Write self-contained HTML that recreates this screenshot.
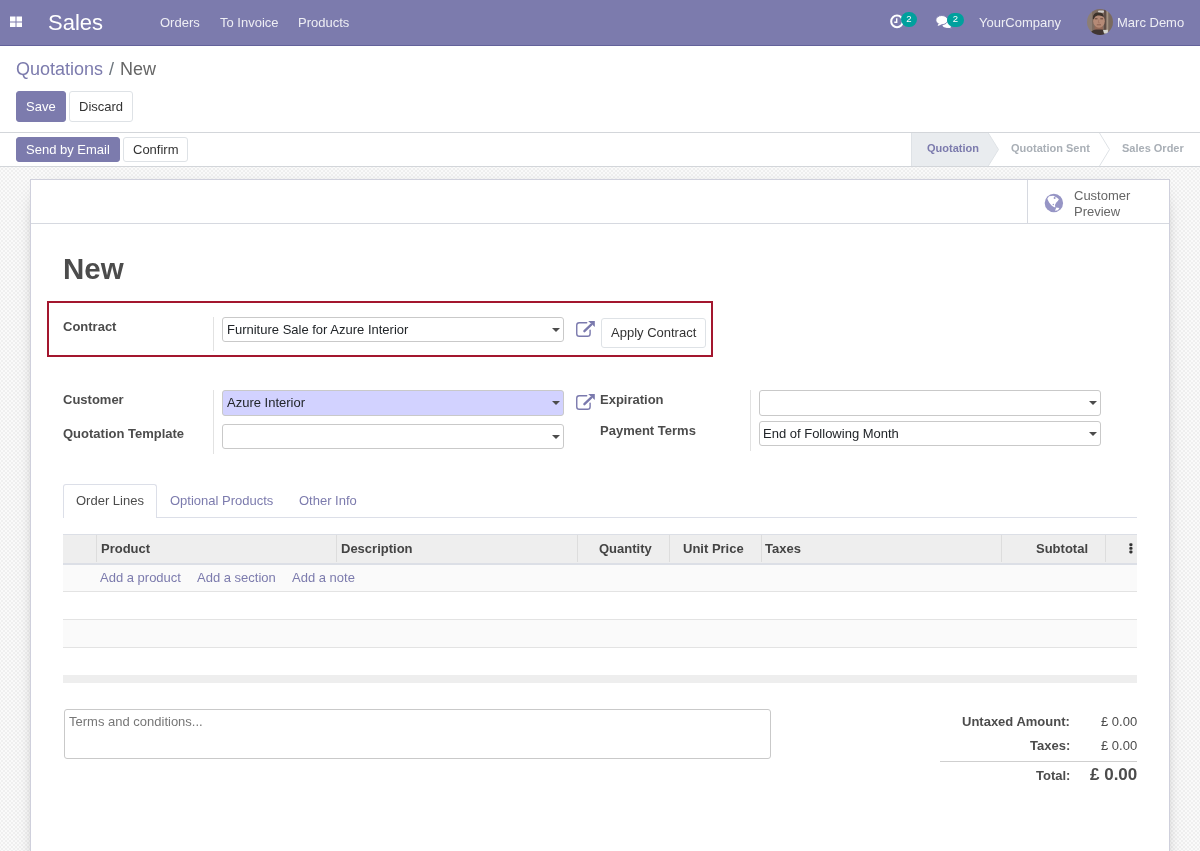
<!DOCTYPE html>
<html><head><meta charset="utf-8">
<style>
*{box-sizing:border-box;margin:0;padding:0}
html,body{width:1200px;height:851px;overflow:hidden;background:#fff}
body{font-family:"Liberation Sans",sans-serif;font-size:13px;color:#4c4c4c;position:relative;line-height:1}
.a{position:absolute;white-space:nowrap;line-height:1;will-change:transform}
#nav{position:absolute;left:0;top:0;width:1200px;height:46px;background:#7c7bad;border-bottom:1px solid #63629a}
.nt{position:absolute;white-space:nowrap;color:#eeeef4;font-size:13px;top:16px;line-height:1;will-change:transform}
.btn{position:absolute;border-radius:3px}
.bp{background:#7c7bad;border:1px solid #7c7bad}
.bs{background:#fff;border:1px solid #dee2e6}
.wt{color:#fff}
.dk{color:#333}
.lk{color:#7c7bad}
.b{font-weight:bold}
#bg{position:absolute;left:0;top:167px;width:1200px;height:684px;
 background-color:#f5f5f5;
 background-image:conic-gradient(#efefef 25%,#fafafa 0 50%,#efefef 0 75%,#fafafa 0);
 background-size:4px 4px;background-position:-1px 1px}
#sheet{position:absolute;left:30px;top:179px;width:1140px;height:700px;background:#fff;border:1px solid #cfd0dc;box-shadow:0 5px 20px -15px #000}
.inp{position:absolute;border:1px solid #c9c9c9;border-radius:3px;background:#fff}
.car{position:absolute;width:0;height:0;border-left:4px solid transparent;border-right:4px solid transparent;border-top:4px solid #4c4c4c}
.vs{position:absolute;width:1px;background:#e2e2e2}
.hl{position:absolute;height:1px}
</style></head><body>

<div id="nav">
  <svg class="a" style="left:10px;top:16px" width="12" height="11" viewBox="0 0 12 11">
    <rect x="0" y="0.5" width="5.5" height="5" fill="#fff"/><rect x="6.5" y="0.5" width="5.5" height="5" fill="#fff"/>
    <rect x="0" y="6.5" width="5.5" height="4.5" fill="#fff"/><rect x="6.5" y="6.5" width="5.5" height="4.5" fill="#fff"/>
  </svg>
  <div class="a" style="left:48px;top:12px;font-size:22px;color:#fff">Sales</div>
  <div class="nt" style="left:160px">Orders</div>
  <div class="nt" style="left:220px">To Invoice</div>
  <div class="nt" style="left:298px">Products</div>
  <!-- clock -->
  <svg class="a" style="left:888px;top:12px" width="20" height="20" viewBox="0 0 20 20">
    <circle cx="9" cy="9.4" r="5.8" fill="none" stroke="#fff" stroke-width="2"/>
    <path d="M8.7 6.3 V10.2 H6.3" fill="none" stroke="#fff" stroke-width="1.4"/>
  </svg>
  <div class="a" style="left:901px;top:11.7px;width:16px;height:14.5px;border-radius:8px;background:#00a09d;color:#fff;font-size:9.5px;text-align:center;line-height:14px">2</div>
  <!-- chat -->
  <svg class="a" style="left:930px;top:8px" width="24" height="24" viewBox="0 0 24 24">
    <ellipse cx="17" cy="16.6" rx="4.6" ry="3.2" fill="#fff"/>
    <path d="M18.5 18 L21.6 20.2 L15.5 19.6Z" fill="#fff"/>
    <ellipse cx="11.8" cy="12.1" rx="6" ry="4.6" fill="#fff" stroke="#7c7bad" stroke-width="0.9"/>
    <path d="M8.6 15.6 L7.6 17.9 L11.8 16.4Z" fill="#fff"/>
  </svg>
  <div class="a" style="left:947px;top:12.8px;width:17px;height:14.4px;border-radius:8px;background:#00a09d;color:#fff;font-size:9.5px;text-align:center;line-height:12px">2</div>
  <div class="nt" style="left:979px">YourCompany</div>
  <svg class="a" style="left:1087px;top:9px" width="26" height="26" viewBox="0 0 26 26">
    <defs><clipPath id="cl"><circle cx="13" cy="13" r="13"/></clipPath>
    <filter id="bl" x="-10%" y="-10%" width="120%" height="120%"><feGaussianBlur stdDeviation="0.45"/></filter></defs>
    <g clip-path="url(#cl)"><g filter="url(#bl)">
      <rect x="-1" y="-1" width="28" height="28" fill="#7e6c60"/>
      <rect x="-1" y="-1" width="6" height="28" fill="#8c7e74"/>
      <rect x="17" y="-1" width="2.5" height="28" fill="#5e4e44"/>
      <rect x="19.5" y="-1" width="2" height="28" fill="#a39282"/>
      <rect x="21.5" y="-1" width="6" height="28" fill="#7a6a5e"/>
      <rect x="11" y="1.6" width="6" height="2.2" rx="1" fill="#d0ccc8"/>
      <path d="M7.6 17 H16 V22 H7.6Z" fill="#946a58"/>
      <ellipse cx="12" cy="12.2" rx="5.8" ry="6.6" fill="#b58a76"/>
      <path d="M5.8 9.5 Q5.8 3.6 11.5 3.6 Q16.5 3.6 16.8 8 Q14 5.8 10.5 6.6 Q7.5 7.3 6.6 10.5Z" fill="#3b302a"/>
      <path d="M7.8 9.8 H10.5 M13.3 9.8 H16" stroke="#5a3c30" stroke-width="0.9"/>
      <path d="M11.8 10.5 L11.3 13.8 H12.8" fill="none" stroke="#9a6e5c" stroke-width="0.6"/>
      <path d="M9.8 15.8 H14" stroke="#7a5040" stroke-width="0.7"/>
      <path d="M2 27 Q4 20.5 9 20.5 H15 Q19 20.5 21 27Z" fill="#403630"/>
      <path d="M16 21 L20.8 20.8 L21 25 L17 24.5Z" fill="#d6d6d0"/>
    </g></g>
  </svg>
  <div class="nt" style="left:1117px">Marc Demo</div>
</div>

<!-- control panel -->
<div class="a lk" style="left:16px;top:60px;font-size:18px">Quotations</div>
<div class="a" style="left:108.5px;top:60px;font-size:18px;color:#6c757d">/</div>
<div class="a" style="left:120px;top:60px;font-size:18px;color:#666">New</div>
<div class="btn bp" style="left:16px;top:91px;width:50px;height:31px"></div>
<div class="a wt" style="left:26px;top:100px">Save</div>
<div class="btn bs" style="left:69px;top:91px;width:64px;height:31px"></div>
<div class="a dk" style="left:79px;top:100px">Discard</div>
<div class="hl" style="left:0;top:132px;width:1200px;background:#d3d6da"></div>

<div class="btn bp" style="left:16px;top:137px;width:104px;height:25px"></div>
<div class="a wt" style="left:26px;top:143px">Send by Email</div>
<div class="btn bs" style="left:123px;top:137px;width:65px;height:25px"></div>
<div class="a dk" style="left:133px;top:143px">Confirm</div>

<!-- statusbar -->
<svg class="a" style="left:900px;top:133px" width="300" height="33" viewBox="0 0 300 33">
  <path d="M11.5 0 H88.3 L98.5 16.5 L88.3 33 H11.5Z" fill="#e9ecef"/>
  <path d="M11.5 0 V33" stroke="#dee2e6" stroke-width="1"/>
  <path d="M88.3 0 L98.5 16.5 L88.3 33" fill="none" stroke="#dee2e6" stroke-width="1"/>
  <path d="M199.5 0 L209.5 16.5 L199.5 33" fill="none" stroke="#dee2e6" stroke-width="1"/>
</svg>
<div class="a b lk" style="left:927px;top:143px;font-size:11px">Quotation</div>
<div class="a b" style="left:1011px;top:143px;font-size:11px;color:#a9afb6">Quotation Sent</div>
<div class="a b" style="left:1122px;top:143px;font-size:11px;color:#a9afb6">Sales Order</div>
<div class="hl" style="left:0;top:166px;width:1200px;background:#d3d6da"></div>

<div id="bg"></div>
<div id="sheet"></div>

<!-- sheet header -->
<div class="hl" style="left:31px;top:223px;width:1138px;background:#d6d9e0"></div>
<div class="vs" style="left:1027px;top:180px;height:43px;background:#d6d9e0"></div>
<svg class="a" style="left:1042px;top:191px" width="24" height="24" viewBox="0 0 24 24">
  <circle cx="11.9" cy="12" r="9.2" fill="#9695c5"/>
  <path d="M5.3 7.8 L7 5.3 L11.3 4.8 L12.8 5.4 L14.7 6.5 L16.9 8.2 L15.8 9.9 L14.1 11.8 L13 14.1 L13.3 16.6 L11.3 15.8 L9.6 14.4 L7.3 11.8 L6.1 9.6 Z" fill="#fff"/>
  <circle cx="12.6" cy="6.9" r="1" fill="#9695c5"/>
  <circle cx="11.3" cy="13.5" r="0.7" fill="#9695c5"/>
  <path d="M13 19.8 L14.3 16.5 L17.4 17 L15.9 19.2 Z" fill="#fff"/>
</svg>
<div class="a" style="left:1074px;top:189px;color:#666">Customer</div>
<div class="a" style="left:1074px;top:205px;color:#666">Preview</div>

<!-- title -->
<div class="a b" style="left:63px;top:254.3px;font-size:29.5px;color:#4c4c4c">New</div>

<!-- red box -->
<div class="a" style="left:47px;top:301px;width:666px;height:56px;border:2px solid #a3162e"></div>
<div class="a b" style="left:63px;top:320px">Contract</div>
<div class="vs" style="left:213px;top:317px;height:34px"></div>
<div class="inp" style="left:222px;top:317px;width:342px;height:25px"></div>
<div class="a" style="left:227px;top:323px;color:#212529">Furniture Sale for Azure Interior</div>
<div class="car" style="left:552px;top:328px"></div>
<svg class="a" style="left:572px;top:316px" width="28" height="24" viewBox="0 0 28 24">
  <path d="M14.7 6.7 H7.3 Q4.75 6.7 4.75 9.2 V17.7 Q4.75 20.25 7.3 20.25 H15.6 Q18.1 20.25 18.1 17.7 V14.1" fill="none" stroke="#7a79ad" stroke-width="1.4" stroke-linecap="round"/>
  <path d="M12.4 15.2 L19.2 8.7" stroke="#7a79ad" stroke-width="2.3" stroke-linecap="round"/>
  <path d="M16.2 4.9 H22.8 V11 Z" fill="#7a79ad"/>
</svg>
<div class="btn bs" style="left:601px;top:318px;width:105px;height:30px"></div>
<div class="a dk" style="left:611px;top:326px">Apply Contract</div>

<!-- group left -->
<div class="a b" style="left:63px;top:393px">Customer</div>
<div class="a b" style="left:63px;top:427px">Quotation Template</div>
<div class="vs" style="left:213px;top:390px;height:64px"></div>
<div class="inp" style="left:222px;top:390px;width:342px;height:26px;background:#d2d2ff"></div>
<div class="a" style="left:227px;top:396px;color:#212529">Azure Interior</div>
<div class="car" style="left:552px;top:401px"></div>
<div class="inp" style="left:222px;top:424px;width:342px;height:25px"></div>
<div class="car" style="left:552px;top:435px"></div>
<svg class="a" style="left:572px;top:389px" width="28" height="24" viewBox="0 0 28 24">
  <path d="M14.7 6.7 H7.3 Q4.75 6.7 4.75 9.2 V17.7 Q4.75 20.25 7.3 20.25 H15.6 Q18.1 20.25 18.1 17.7 V14.1" fill="none" stroke="#7a79ad" stroke-width="1.4" stroke-linecap="round"/>
  <path d="M12.4 15.2 L19.2 8.7" stroke="#7a79ad" stroke-width="2.3" stroke-linecap="round"/>
  <path d="M16.2 4.9 H22.8 V11 Z" fill="#7a79ad"/>
</svg>

<!-- group right -->
<div class="a b" style="left:600px;top:393px">Expiration</div>
<div class="a b" style="left:600px;top:424px">Payment Terms</div>
<div class="vs" style="left:750px;top:390px;height:61px"></div>
<div class="inp" style="left:759px;top:390px;width:342px;height:26px"></div>
<div class="car" style="left:1089px;top:401px"></div>
<div class="inp" style="left:759px;top:421px;width:342px;height:25px"></div>
<div class="a" style="left:763px;top:427px;color:#212529">End of Following Month</div>
<div class="car" style="left:1089px;top:432px"></div>

<!-- tabs -->
<div class="hl" style="left:63px;top:517px;width:1074px;background:#dcdfe8"></div>
<div class="a" style="left:63px;top:484px;width:94px;height:34px;background:#fff;border:1px solid #dcdfe8;border-bottom:none;border-radius:3px 3px 0 0"></div>
<div class="a" style="left:76px;top:494px;color:#4c4c4c">Order Lines</div>
<div class="a lk" style="left:170px;top:494px">Optional Products</div>
<div class="a lk" style="left:299px;top:494px">Other Info</div>

<!-- table -->
<div class="a" style="left:63px;top:534px;width:1074px;height:31px;background:#eeeeee;border-top:1px solid #dcdfe6;border-bottom:2px solid #dcdfe6"></div>
<div class="vs" style="left:96px;top:535px;height:27px;background:#dddddd"></div>
<div class="vs" style="left:336px;top:535px;height:27px;background:#dddddd"></div>
<div class="vs" style="left:577px;top:535px;height:27px;background:#dddddd"></div>
<div class="vs" style="left:669px;top:535px;height:27px;background:#dddddd"></div>
<div class="vs" style="left:761px;top:535px;height:27px;background:#dddddd"></div>
<div class="vs" style="left:1001px;top:535px;height:27px;background:#dddddd"></div>
<div class="vs" style="left:1105px;top:535px;height:27px;background:#dddddd"></div>
<div class="a b" style="left:101px;top:542px;color:#444">Product</div>
<div class="a b" style="left:341px;top:542px;color:#444">Description</div>
<div class="a b" style="left:599px;top:542px;color:#444">Quantity</div>
<div class="a b" style="left:682.5px;top:542px;color:#444">Unit Price</div>
<div class="a b" style="left:765px;top:542px;color:#444">Taxes</div>
<div class="a b" style="left:1036px;top:542px;color:#444">Subtotal</div>
<svg class="a" style="left:1128.5px;top:542.5px" width="4" height="11" viewBox="0 0 4 11">
  <rect x="0.3" y="0.3" width="3.2" height="2.9" rx="1.1" fill="#333"/><rect x="0.3" y="3.9" width="3.2" height="2.9" rx="1.1" fill="#333"/><rect x="0.3" y="7.5" width="3.2" height="2.9" rx="1.1" fill="#333"/>
</svg>
<div class="a" style="left:63px;top:565px;width:1074px;height:26px;background:#fafafa"></div>
<div class="hl" style="left:63px;top:591px;width:1074px;background:#e3e3e3"></div>
<div class="a" style="left:63px;top:620px;width:1074px;height:27px;background:#fafafa"></div>
<div class="hl" style="left:63px;top:619px;width:1074px;background:#e3e3e3"></div>
<div class="hl" style="left:63px;top:647px;width:1074px;background:#e3e3e3"></div>
<div class="a" style="left:63px;top:675px;width:1074px;height:8px;background:#eeeeee"></div>
<div class="a lk" style="left:100px;top:571px">Add a product</div>
<div class="a lk" style="left:196.5px;top:571px">Add a section</div>
<div class="a lk" style="left:291.5px;top:571px">Add a note</div>

<!-- notes -->
<div class="inp" style="left:64px;top:709px;width:707px;height:50px"></div>
<div class="a" style="left:69px;top:715px;color:#777">Terms and conditions...</div>

<!-- totals -->
<div class="a b" style="right:130px;top:715px;text-align:right">Untaxed Amount:</div>
<div class="a" style="right:63px;top:715px;text-align:right">£ 0.00</div>
<div class="a b" style="right:130px;top:739px;text-align:right">Taxes:</div>
<div class="a" style="right:63px;top:739px;text-align:right">£ 0.00</div>
<div class="hl" style="left:940px;top:761px;width:197px;background:#cfcfcf"></div>
<div class="a b" style="right:130px;top:769px;text-align:right">Total:</div>
<div class="a b" style="right:63px;top:766px;font-size:17px;text-align:right">£ 0.00</div>

</body></html>
